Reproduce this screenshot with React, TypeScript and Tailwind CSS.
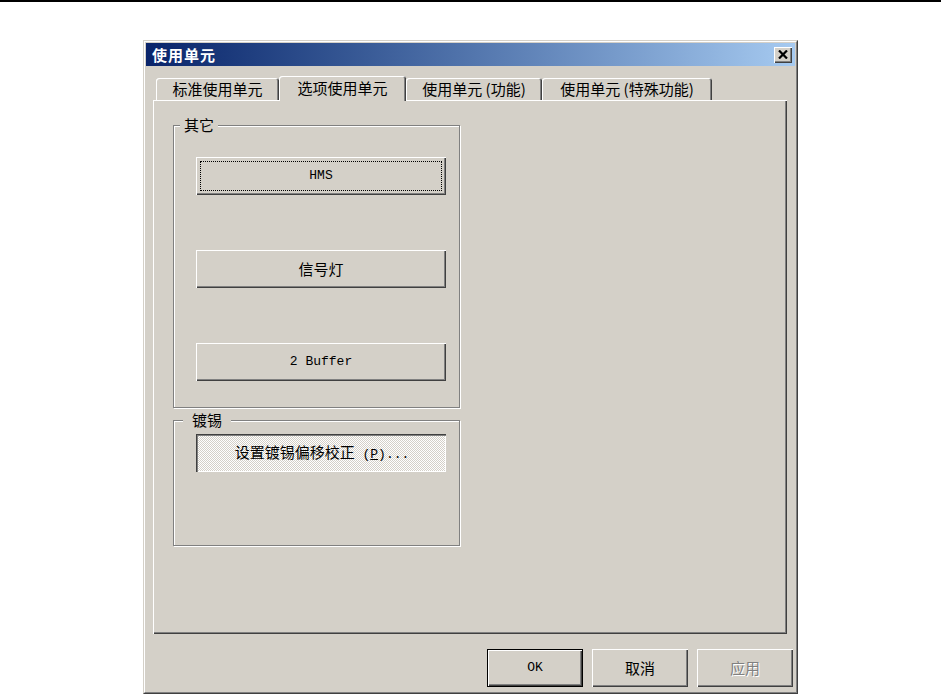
const cjk = "font-['Noto_Sans_CJK_SC','Noto_Sans_CJK_JP',sans-serif]";
const mono = "font-['Liberation_Mono','Noto_Sans_CJK_SC',monospace]";

const tabs = [
  { label: "标准使用单元", w: "w-[123px]", active: false },
  { label: "选项使用单元", w: "w-[127px]", active: true },
  { label: "使用单元 (功能)", w: "w-[136px]", active: false },
  { label: "使用单元 (特殊功能)", w: "w-[170px]", active: false },
];

function CloseIcon() {
  return (
    <svg width="10" height="9" viewBox="0 0 10 9">
      <path d="M1 0.5 L9 8.5 M9 0.5 L1 8.5" stroke="#000" strokeWidth="2.2" fill="none" />
    </svg>
  );
}

function GroupBox({
  label,
  labelPos,
  className,
  children,
}: {
  label: string;
  labelPos: string;
  className: string;
  children: React.ReactNode;
}) {
  return (
    <div
      className={`relative border border-[#808080] shadow-[inset_1px_1px_#fff,1px_1px_#fff] ${className}`}
    >
      <span
        className={`absolute top-[-10px] bg-[#d4d0c8] text-[15px] leading-[18px] text-black ${labelPos}`}
      >
        {label}
      </span>
      {children}
    </div>
  );
}

export default function App() {
  return (
    <div className={`w-[941px] h-[694px] overflow-hidden bg-white border-t-2 border-black ${cjk}`}>
      <div className="ml-[143px] mt-[38px] w-[655px] h-[654px] bg-[#d4d0c8] border border-t-[#d4d0c8] border-l-[#d4d0c8] border-r-[#404040] border-b-[#404040]">
        <div className="h-full border border-t-white border-l-white border-r-[#808080] border-b-[#808080] p-px">
          {/* title bar */}
          <div className="h-[23px] flex items-center justify-between bg-linear-to-r from-[#0a246a] to-[#a6caf0] pl-[6px] pr-[3px]">
            <span className="text-white font-bold text-[15px] leading-none tracking-[1px]">使用单元</span>
            <div className="w-[18px] h-[16px] flex items-center justify-center bg-[#d4d0c8] shadow-[inset_1px_1px_#fff,inset_-1px_-1px_#404040,inset_-2px_-2px_#808080]">
              <CloseIcon />
            </div>
          </div>

          <div className="pt-[10px] pl-[7px] pr-[2px]">
            {/* tabs */}
            <div className="flex items-end h-[24px] pl-[3px]">
              {tabs.map((t) =>
                t.active ? (
                  <div
                    key={t.label}
                    className={`${t.w} h-[25px] -mb-px relative z-10 bg-[#d4d0c8] rounded-t-[3px] shadow-[inset_1px_1px_#fff,inset_-1px_0_#404040,inset_-2px_0_#808080] flex items-center justify-center text-[15px] text-black`}
                  >
                    {t.label}
                  </div>
                ) : (
                  <div
                    key={t.label}
                    className={`${t.w} h-[22px] rounded-t-[3px] shadow-[inset_1px_1px_#fff,inset_-1px_0_#404040,inset_-2px_0_#808080] flex items-center justify-center text-[15px] text-black`}
                  >
                    {t.label}
                  </div>
                )
              )}
            </div>

            {/* panel */}
            <div className="mr-[6px] h-[534px] shadow-[inset_1px_1px_#fff,inset_-1px_-1px_#404040,inset_-2px_-2px_#808080] pt-[25px] pl-[20px]">
              <GroupBox label="其它" labelPos="left-[6px] px-[4px]" className="w-[287px] h-[283px]">
                <div className="flex flex-col gap-[55px] pt-[31px] pl-[22px]">
                  <button className="w-[250px] h-[38px] bg-[#d4d0c8] shadow-[inset_1px_1px_#fff,inset_-1px_-1px_#404040,inset_-2px_-2px_#808080] outline-1 outline-dotted outline-black outline-offset-[-5px] text-[13px] text-black font-['Liberation_Mono',monospace]">
                    HMS
                  </button>
                  <button className="w-[250px] h-[38px] bg-[#d4d0c8] shadow-[inset_1px_1px_#fff,inset_-1px_-1px_#404040,inset_-2px_-2px_#808080] text-[15px] text-black">
                    信号灯
                  </button>
                  <button className="w-[250px] h-[38px] bg-[#d4d0c8] shadow-[inset_1px_1px_#fff,inset_-1px_-1px_#404040,inset_-2px_-2px_#808080] text-[13px] text-black font-['Liberation_Mono',monospace]">
                    2 Buffer
                  </button>
                </div>
              </GroupBox>

              <GroupBox label="镀锡" labelPos="left-[9px] px-[9px]" className="mt-[12px] w-[287px] h-[126px]">
                <div className="pt-[13px] pl-[22px]">
                  <button className={`w-[250px] h-[38px] pl-[2px] pt-[1px] bg-[repeating-conic-gradient(#ffffff_0_25%,#d4d0c8_0_50%)] bg-[length:2px_2px] shadow-[inset_1px_1px_#404040,inset_2px_2px_#808080,inset_-1px_-1px_#fff] text-[15px] text-black ${mono}`}>
                    <span className={cjk}>设置镀锡偏移校正</span>
                    <span className="text-[13px]"> (<u>P</u>)...</span>
                  </button>
                </div>
              </GroupBox>
            </div>

            {/* dialog buttons */}
            <div className="flex justify-end gap-[9px] mt-[15px]">
              <button className="w-[96px] h-[38px] bg-[#d4d0c8] border border-black shadow-[inset_1px_1px_#fff,inset_-1px_-1px_#404040,inset_-2px_-2px_#808080] text-[13px] text-black font-['Liberation_Mono',monospace]">
                OK
              </button>
              <button className="w-[96px] h-[38px] bg-[#d4d0c8] shadow-[inset_1px_1px_#fff,inset_-1px_-1px_#404040,inset_-2px_-2px_#808080] text-[15px] text-black">
                取消
              </button>
              <button className="w-[96px] h-[38px] bg-[#d4d0c8] shadow-[inset_1px_1px_#fff,inset_-1px_-1px_#404040,inset_-2px_-2px_#808080] text-[15px] text-[#808080] [text-shadow:1px_1px_#fff]">
                应用
              </button>
            </div>
          </div>
        </div>
      </div>
    </div>
  );
}
